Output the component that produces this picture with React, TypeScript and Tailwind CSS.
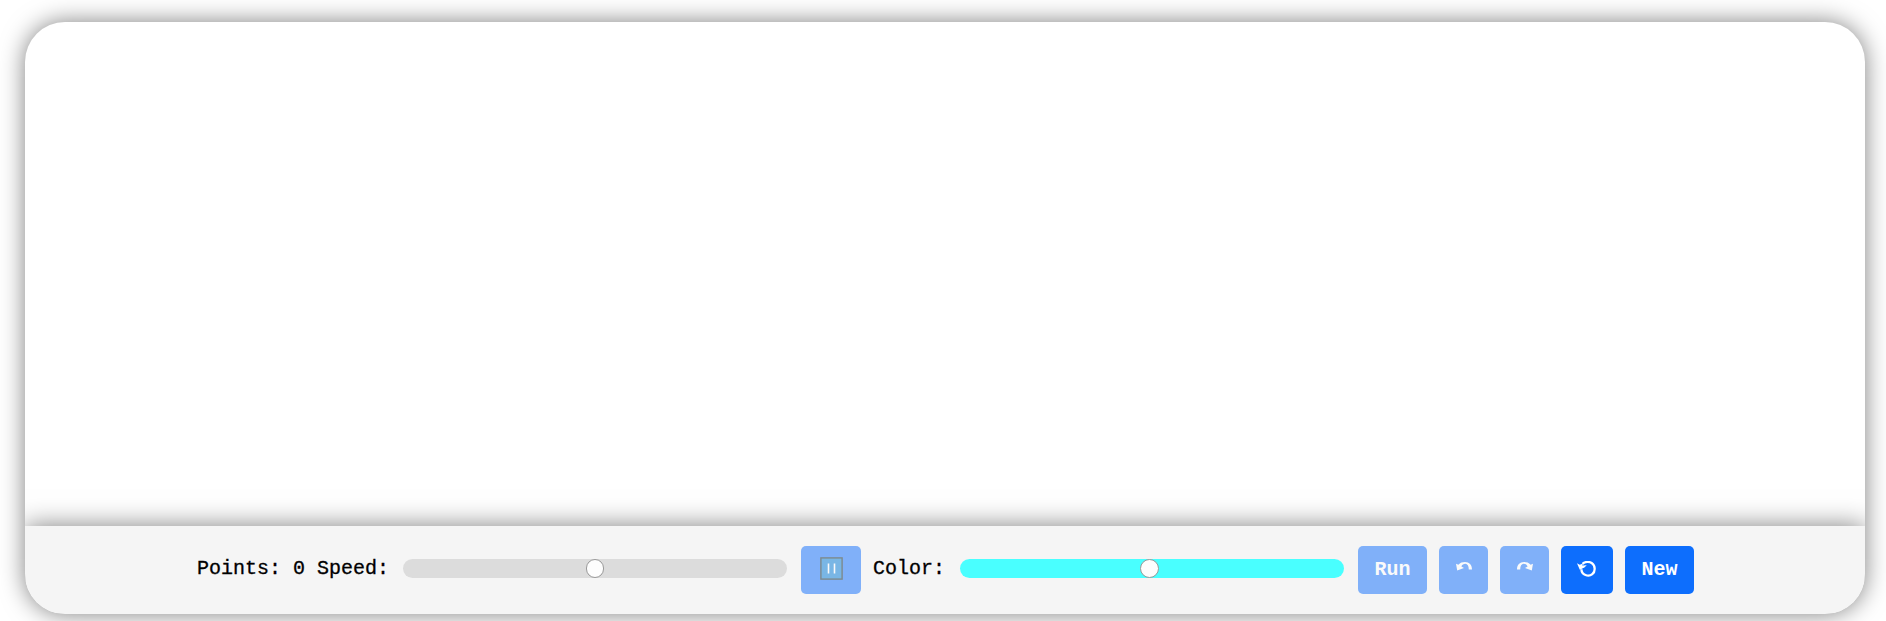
import { useState } from "react";
import type { ReactNode } from "react";

function Slider({ label, initial, track, thumb }: { label: string; initial: number; track: string; thumb: string }) {
  const [value, setValue] = useState(initial);
  return (
    <input
      type="range"
      aria-label={label}
      step={0.1}
      value={value}
      onChange={(e) => setValue(Number(e.target.value))}
      className={`mb-[3px] h-[19px] w-96 shrink-0 appearance-none rounded-full outline-none [&::-webkit-slider-thumb]:h-[19px] [&::-webkit-slider-thumb]:appearance-none [&::-webkit-slider-thumb]:rounded-full [&::-webkit-slider-thumb]:border [&::-webkit-slider-thumb]:border-[#999] [&::-webkit-slider-thumb]:bg-[#fdfdfd] ${track} ${thumb}`}
    />
  );
}

function Button({ width, disabled, label, children }: { width: string; disabled?: boolean; label: string; children: ReactNode }) {
  return (
    <button
      aria-label={label}
      disabled={disabled}
      className={`flex h-12 shrink-0 items-center justify-center rounded-[5px] bg-[#0d6efd] font-bold text-white disabled:opacity-50 ${width}`}
    >
      {children}
    </button>
  );
}

function UndoIcon({ className = "" }: { className?: string }) {
  return (
    <svg viewBox="0 0 16 9" className={`h-[9px] w-4 ${className}`}>
      <path d="M0 1.8L2.4 2.8C4.2.6 6.3 0 9 0C13.2 0 16 2.8 16 7.4H12.8C12.8 4 11.4 1.8 9.4 1.8C7.6 1.8 6 3 5.4 4.4L8 6L1.2 8.6Z" fill="white" />
    </svg>
  );
}

export default function App() {
  return (
    <main className="h-[621px] overflow-hidden bg-white pt-[22px] pl-[25px]">
      <section className="flex h-[592px] w-[1840px] flex-col overflow-hidden rounded-[40px] bg-white shadow-[0_0_25px_rgba(0,0,0,0.5)]">
        <div className="flex-1" />
        <div className="flex h-22 items-start bg-[#f5f5f5] pt-5 pl-[172px] font-['Courier_New','Liberation_Mono',monospace] text-[20px] leading-6 text-black shadow-[0_0_25px_rgba(0,0,0,0.5)]">
          <div className="flex h-12 items-center">
            <span className="mr-3.5 mb-0.5 w-48 shrink-0 whitespace-nowrap [-webkit-text-stroke:0.3px_black]">Points: 0 Speed:</span>
            <Slider label="Speed" initial={50} track="bg-[#dcdcdc]" thumb="[&::-webkit-slider-thumb]:w-[18px]" />
            <div className="ml-3.5">
              <Button width="w-15" label="Pause" disabled>
                <svg viewBox="0 0 24 23" className="-mt-1 mr-px h-[23px] w-6">
                  <rect x="1.2" y=".2" width="22.6" height="22.6" fill="#082128" />
                  <rect x="2.6" y="1.6" width="19.8" height="19.8" fill="#0078d7" />
                  <path d="M9.5 6.5v10M15.5 6.5v10" stroke="white" strokeWidth="1.6" />
                </svg>
              </Button>
            </div>
            <span className="mr-[15px] mb-0.5 ml-3 w-18 shrink-0 [-webkit-text-stroke:0.3px_black]">Color:</span>
            <Slider label="Color" initial={49.3} track="bg-[#49ffff]" thumb="[&::-webkit-slider-thumb]:w-[19px]" />
            <div className="ml-3.5 flex gap-3">
              <Button width="w-[69px]" label="Run" disabled>Run</Button>
              <Button width="w-[49px]" label="Undo" disabled><UndoIcon className="-mt-[7px]" /></Button>
              <Button width="w-[49px]" label="Redo" disabled><UndoIcon className="-mt-[7px] -scale-x-100" /></Button>
              <Button width="w-[52px]" label="Reset">
                <svg viewBox="0 0 20 16" className="-mt-[3px] h-4 w-5">
                  <path d="M5.5 2.8C7.8.6 12.2.3 15 2.2C18.4 4.6 18.6 10.6 15.3 13.1C11.5 16.2 4.6 14 4.4 8.2" fill="none" stroke="white" strokeWidth="2.3" />
                  <path d="M0 2.2L2.7 3.7L6 2.4L5.2 4.5L9.8 4.2L7.4 6.4L2.8 8.8Z" fill="white" />
                </svg>
              </Button>
              <Button width="w-[69px]" label="New">New</Button>
            </div>
          </div>
        </div>
      </section>
    </main>
  );
}
